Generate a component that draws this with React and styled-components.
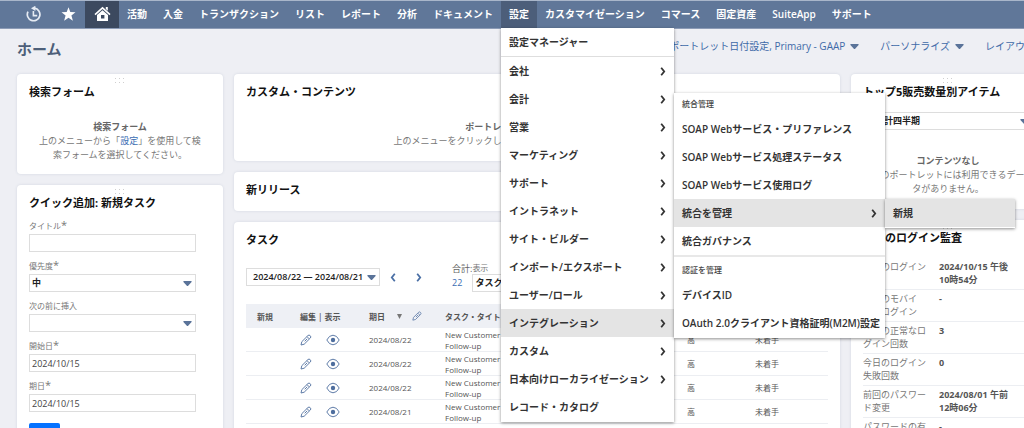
import React from "react";
import styled, { createGlobalStyle, css } from "styled-components";

const GlobalStyle = createGlobalStyle`
  * { box-sizing: border-box; }
  html { scrollbar-width: none; }
  body {
    margin: 0;
    background: #eeeff4;
    color: #333;
    font-family: "Open Sans", "Noto Sans CJK JP", sans-serif;
    font-size: 9px;
    line-height: 14px;
  }
  button, input, select { font: inherit; color: inherit; }
  ul { list-style: none; margin: 0; padding: 0; }
  h1, h2, h3, p { margin: 0; }
`;

const Page = styled.div`
  min-height: 100vh;
  overflow: hidden;
`;

/* Navigation */
const NavBar = styled.nav`
  position: relative;
  z-index: 10;
  height: 29px;
  background: #607799;
  border-top: 1px solid #a9b6ca;
  border-bottom: 1px solid #8c9bb6;
`;
const NavList = styled.ul`
  display: flex;
  height: 100%;
  padding-left: 17px;
`;
const NavItem = styled.li`
  position: relative;
  height: 100%;
`;
const NavButton = styled.button`
  display: flex;
  align-items: center;
  justify-content: center;
  height: 100%;
  min-width: ${(p) => (p.$icon ? "34px" : "0")};
  padding: 0 ${(p) => (p.$icon ? "0" : "8px")} 1px;
  border: 0;
  background: ${(p) => (p.$tone === "current" ? "#3c495f" : p.$tone === "open" ? "#4c5e7a" : "transparent")};
  color: #fff;
  font-size: 10px;
  font-weight: 600;
  white-space: nowrap;
`;

/* Menus */
const menuBox = css`
  position: absolute;
  padding-bottom: 1px;
  background: #fff;
  box-shadow: 0 1px 3px rgba(0, 0, 0, 0.45);
`;
const MainMenu = styled.ul`
  ${menuBox}
  top: 100%;
  left: 0;
  width: 173px;
`;
const SubMenu = styled.div`
  ${menuBox}
  top: -216px;
  left: 100%;
  width: 211px;
`;
const FlyOut = styled.ul`
  ${menuBox}
  top: 0;
  left: 100%;
  width: 130px;
`;
const MenuItem = styled.li`
  position: relative;
  border-bottom: ${(p) => (p.$divided ? "1px solid #dedede" : "0")};
`;
const MenuButton = styled.button`
  display: flex;
  align-items: center;
  justify-content: space-between;
  width: 100%;
  height: 28px;
  padding: 0 8px;
  border: 0;
  background: ${(p) => (p.$active ? "#e4e4e4" : "transparent")};
  color: #333;
  font-size: 10px;
  font-weight: 600;
  white-space: nowrap;
  text-align: left;
`;
const MenuGroup = styled.section`
  & + & {
    border-top: 2px solid #e8e8e8;
    padding-top: 2px;
  }
`;
const MenuHeading = styled.h3`
  padding: 0 8px;
  color: #444;
  font-size: 8px;
  font-weight: 500;
  line-height: 22px;
`;

/* Page header */
const PageHeader = styled.header`
  display: flex;
  justify-content: space-between;
  height: 45px;
  margin-right: -25px;
  padding: 10px 0 0 17px;
`;
const PageTitle = styled.h1`
  color: #4d5f79;
  font-size: 15px;
  font-weight: 700;
  line-height: 20px;
`;
const HeaderLinks = styled.div`
  display: flex;
  gap: 21px;
`;
const HeaderLink = styled.a`
  display: flex;
  align-items: center;
  gap: 5px;
  height: 14px;
  color: #3e6aa8;
  font-size: 10px;
  text-decoration: none;
  white-space: nowrap;
`;

/* Dashboard */
const Dashboard = styled.main`
  display: grid;
  grid-template-columns: 206px minmax(0, 1fr) 194px;
  gap: 11px;
  margin-right: -21px;
  padding-left: 17px;
`;
const Column = styled.div`
  display: flex;
  flex-direction: column;
  gap: 11px;
  min-width: 0;
  & > section:last-child { flex: 1; }
`;
const Card = styled.section`
  position: relative;
  padding: 10px 12px ${(p) => p.$bottom || "12px"};
  border-radius: 4px;
  background: #fff;
  box-shadow: 0 0 3px rgba(60, 75, 110, 0.14);
`;
const CardTitle = styled.h2`
  color: #111;
  font-size: 11px;
  font-weight: 700;
  line-height: 16px;
  white-space: nowrap;
`;
const DragHandle = styled.span`
  position: absolute;
  top: 4px;
  left: 50%;
  display: flex;
  margin-left: -6px;
`;
const Message = styled.div`
  margin-top: ${(p) => p.$gap || "20px"};
  padding: 0 8px;
  color: #777;
  text-align: center;
`;
const MessageTitle = styled.p`
  color: #666;
  font-weight: 600;
`;
const TextLink = styled.a`
  color: #3a6db3;
  text-decoration: none;
`;

/* Forms */
const Form = styled.form`
  display: flex;
  flex-direction: column;
  align-items: flex-start;
  gap: 8px;
  padding-top: 9px;
`;
const Field = styled.div`
  display: flex;
  flex-direction: column;
  gap: 2px;
  width: 167px;
`;
const Label = styled.label`
  height: 12px;
  color: #777;
  font-size: 8px;
  line-height: 12px;
`;
const Required = styled.span`
  font-size: 11px;
  line-height: 0;
`;
const control = css`
  width: 100%;
  height: 18px;
  padding: 0 2px;
  border: 1px solid #ddd;
  border-radius: 0;
  background: #fff;
  font-size: 9px;
`;
const Input = styled.input`
  ${control}
  color: #444;
`;
const SelectWrap = styled.div`
  position: relative;
  display: flex;
  width: ${(p) => p.$width || "100%"};
  & > svg {
    position: absolute;
    top: 50%;
    right: 4px;
    margin-top: -2px;
    pointer-events: none;
  }
`;
const Select = styled.select`
  ${control}
  appearance: none;
  padding-left: ${(p) => p.$indent || "2px"};
  color: #222;
  font-weight: 600;
`;
const Filter = styled.div`
  margin-top: 12px;
`;
const SubmitButton = styled.button`
  width: 31px;
  height: 20px;
  margin-top: 3px;
  border: 0;
  border-radius: 2px;
  background: #0572ff;
`;

/* Tasks */
const TaskToolbar = styled.div`
  display: flex;
  align-items: flex-start;
  height: 42px;
  margin-top: 14px;
`;
const RangeSlot = styled.div`
  padding-top: 6px;
`;
const PageButton = styled.button`
  display: flex;
  align-items: center;
  justify-content: center;
  width: 26px;
  height: 18px;
  margin-top: 6px;
  padding: 0;
  border: 0;
  background: none;
`;
const Total = styled.div`
  display: flex;
  flex-direction: column;
  margin-left: 20px;
  color: #666;
`;
const ViewField = styled.div`
  display: flex;
  flex-direction: column;
  width: 100px;
`;
const TaskTable = styled.table`
  width: 100%;
  table-layout: fixed;
  border-collapse: separate;
  border-spacing: 0;
  font-size: 8px;
  line-height: 11px;
`;
const Th = styled.th`
  width: ${(p) => p.$w || "auto"};
  height: 24px;
  padding: 0 0 0 ${(p) => p.$pad || "8px"};
  background: #eef0f5;
  color: #555;
  font-weight: 600;
  text-align: left;
  white-space: nowrap;
`;
const Td = styled.td`
  height: 24px;
  padding: 0 0 0 8px;
  border-bottom: 1px solid #eceef2;
  color: #555;
  vertical-align: middle;
`;
const Inline = styled.span`
  display: flex;
  align-items: center;
  gap: ${(p) => p.$gap};
`;
const TaskName = styled.span`
  display: block;
  width: 60px;
`;
const IconLink = styled.a`
  display: flex;
`;

/* Login audit */
const AuditTable = styled.table`
  width: 100%;
  margin-top: 12px;
  table-layout: fixed;
  border-collapse: separate;
  border-spacing: 0;
  line-height: 13px;
`;
const AuditLabel = styled.th`
  width: 76px;
  height: 32px;
  padding: 2px 11px 3px 0;
  border-bottom: 1px solid #eceef2;
  color: #777;
  font-weight: 400;
  text-align: left;
  vertical-align: top;
`;
const AuditValue = styled.td`
  padding: 2px 0 3px;
  border-bottom: 1px solid #eceef2;
  color: #555;
  font-weight: 700;
  vertical-align: top;
  word-break: keep-all;
`;

/* Icons */
const Caret = ({ color = "#5a7399" }) => (
  <svg width="9" height="5" viewBox="0 0 9 5" aria-hidden="true">
    <path d="M1 0h7q1 0 .6 1L5.4 4.4q-.9 1-1.8 0L.4 1Q0 0 1 0z" fill={color} />
  </svg>
);
const Chevron = ({ color = "#333", left }) => (
  <svg width="6" height="9" viewBox="0 0 6 9" aria-hidden="true">
    <path d={left ? "M4.8.8 1.8 4.5 4.8 8.2" : "M1.2.8 4.2 4.5 1.2 8.2"} fill="none" stroke={color} strokeWidth="1.8" />
  </svg>
);
const HistoryIcon = () => (
  <svg width="16" height="16" viewBox="0 0 16 16" fill="none" stroke="#e6ebf3" aria-hidden="true">
    <path d="M2 5.6A6.3 6.3 0 1 0 8.5 2.2" strokeWidth="1.7" />
    <path d="M5 2.3 9.4-.3v5.2z" fill="#e6ebf3" stroke="none" />
    <path d="M7.4 5v4.6h3.8" strokeWidth="1.6" />
  </svg>
);
const StarIcon = () => (
  <svg width="15" height="15" viewBox="0 0 15 15" aria-hidden="true">
    <path d="M7.5.3 9.3 5.1l5.2.2-4.1 3.3 1.5 5.1-4.4-2.9-4.4 2.9 1.5-5.1L.5 5.3l5.2-.2z" fill="#fff" />
  </svg>
);
const HomeIcon = () => (
  <svg width="17" height="16" viewBox="0 0 17 16" aria-hidden="true">
    <path d="M11.8 1h2v3.8l-2-1.8z" fill="#fff" />
    <path d="M1 8.6 8.5 1.8 16 8.6" fill="none" stroke="#fff" strokeWidth="1.6" />
    <path d="M3 9.1 8.5 4.2 14 9.1V15H3zM7 9v3.4h3.4V9z" fill="#fff" fillRule="evenodd" />
  </svg>
);
const PencilIcon = ({ size = 12 }) => (
  <svg width={size} height={size} viewBox="0 0 12 12" fill="none" stroke="#5f7ca8" strokeWidth="1" aria-hidden="true">
    <path d="M1 11 1.8 7.7 8 1.5Q9 .5 10.2 1.7T10.4 4L4.2 10.2zM7 2.6l2.3 2.3M4.7 7.3l2.5-2.5" />
  </svg>
);
const EyeIcon = () => (
  <svg width="14" height="12" viewBox="0 0 14 12" aria-hidden="true">
    <path d="M.8 6Q3.2 1.2 7 1.2T13.2 6Q10.8 10.8 7 10.8T.8 6z" fill="none" stroke="#5f7ca8" />
    <circle cx="7" cy="6" r="2.2" fill="#4e6e9e" />
  </svg>
);
const Grip = () => (
  <DragHandle>
    <svg width="12" height="6" viewBox="0 0 12 6" fill="#cfcfcf" aria-hidden="true">
      {[1, 5, 9].map((x) => (
        <React.Fragment key={x}>
          <rect x={x} y="0" width="1" height="1" />
          <rect x={x} y="4" width="1" height="1" />
        </React.Fragment>
      ))}
    </svg>
  </DragHandle>
);

const navBefore = ["活動", "入金", "トランザクション", "リスト", "レポート", "分析", "ドキュメント"];
const navAfter = ["カスタマイゼーション", "コマース", "固定資産", "SuiteApp", "サポート"];
const setupItems = [
  "会社", "会計", "営業", "マーケティング", "サポート", "イントラネット", "サイト・ビルダー",
  "インポート/エクスポート", "ユーザー/ロール", "インテグレーション", "カスタム", "日本向けローカライゼーション",
];
const dates = ["2024/08/22", "2024/08/22", "2024/08/22", "2024/08/21"];
const audit = [
  ["前回のログイン", "2024/10/15 午後 10時54分"],
  ["前回のモバイル・ログイン", "-"],
  ["前回の正常なログイン回数", "3"],
  ["今日のログイン失敗回数", "0"],
  ["前回のパスワード変更", "2024/08/01 午前 12時06分"],
  ["パスワードの有効期限", "-"],
];

const Item = ({ label, arrow, active, divided, children }) => (
  <MenuItem $divided={divided}>
    <MenuButton type="button" $active={active}>
      {label}
      {arrow && <Chevron />}
    </MenuButton>
    {children}
  </MenuItem>
);

const IntegrationMenu = () => (
  <SubMenu>
    <MenuGroup>
      <MenuHeading>統合管理</MenuHeading>
      <ul>
        <Item label="SOAP Webサービス・プリファレンス" />
        <Item label="SOAP Webサービス処理ステータス" />
        <Item label="SOAP Webサービス使用ログ" />
        <Item label="統合を管理" arrow active>
          <FlyOut>
            <Item label="新規" active />
          </FlyOut>
        </Item>
        <Item label="統合ガバナンス" />
      </ul>
    </MenuGroup>
    <MenuGroup>
      <MenuHeading>認証を管理</MenuHeading>
      <ul>
        <Item label="デバイスID" />
        <Item label="OAuth 2.0クライアント資格証明(M2M)設定" />
      </ul>
    </MenuGroup>
  </SubMenu>
);

const Navigation = () => (
  <NavBar>
    <NavList>
      <NavItem><NavButton $icon aria-label="履歴"><HistoryIcon /></NavButton></NavItem>
      <NavItem><NavButton $icon aria-label="ショートカット"><StarIcon /></NavButton></NavItem>
      <NavItem><NavButton $icon $tone="current" aria-label="ホーム"><HomeIcon /></NavButton></NavItem>
      {navBefore.map((t) => <NavItem key={t}><NavButton>{t}</NavButton></NavItem>)}
      <NavItem>
        <NavButton $tone="open" aria-expanded="true">設定</NavButton>
        <MainMenu>
          <Item label="設定マネージャー" divided />
          {setupItems.map((t) => (
            <Item key={t} label={t} arrow active={t === "インテグレーション"}>
              {t === "インテグレーション" && <IntegrationMenu />}
            </Item>
          ))}
          <Item label="レコード・カタログ" />
        </MainMenu>
      </NavItem>
      {navAfter.map((t) => <NavItem key={t}><NavButton>{t}</NavButton></NavItem>)}
    </NavList>
  </NavBar>
);

const FieldLabel = ({ id, label, required }) => (
  <Label htmlFor={id}>{label}{required && <Required>*</Required>}</Label>
);
const TextField = ({ id, label, value, required }) => (
  <Field>
    <FieldLabel id={id} label={label} required={required} />
    <Input id={id} defaultValue={value} />
  </Field>
);
const SelectField = ({ id, label, value, required }) => (
  <Field>
    <FieldLabel id={id} label={label} required={required} />
    <SelectWrap>
      <Select id={id}><option>{value}</option></Select>
      <Caret />
    </SelectWrap>
  </Field>
);

export default function App() {
  return (
    <Page>
      <GlobalStyle />
      <Navigation />
      <PageHeader>
        <PageTitle>ホーム</PageTitle>
        <HeaderLinks>
          <HeaderLink href="#dates">ポートレット日付設定, Primary - GAAP<Caret /></HeaderLink>
          <HeaderLink href="#personalize">パーソナライズ<Caret /></HeaderLink>
          <HeaderLink href="#layout">レイアウト<Caret /></HeaderLink>
        </HeaderLinks>
      </PageHeader>
      <Dashboard>
        <Column>
          <Card>
            <Grip />
            <CardTitle>検索フォーム</CardTitle>
            <Message>
              <MessageTitle>検索フォーム</MessageTitle>
              <p>上のメニューから「<TextLink href="#setup">設定</TextLink>」を使用して検索フォームを選択してください。</p>
            </Message>
          </Card>
          <Card>
            <Grip />
            <CardTitle>クイック追加: 新規タスク</CardTitle>
            <Form>
              <TextField id="title" label="タイトル" value="" required />
              <SelectField id="priority" label="優先度" value="中" required />
              <SelectField id="insert" label="次の前に挿入" value="" />
              <TextField id="start" label="開始日" value="2024/10/15" required />
              <TextField id="due" label="期日" value="2024/10/15" required />
              <SubmitButton type="button" aria-label="保存" />
            </Form>
          </Card>
        </Column>

        <Column>
          <Card $bottom="13px">
            <CardTitle>カスタム・コンテンツ</CardTitle>
            <Message>
              <MessageTitle>ポートレットのカスタマイズと設定</MessageTitle>
              <p>上のメニューをクリックしてポートレットに表示する内容を選びます。</p>
            </Message>
          </Card>
          <Card $bottom="13px">
            <CardTitle>新リリース</CardTitle>
          </Card>
          <Card>
            <CardTitle>タスク</CardTitle>
            <TaskToolbar>
              <RangeSlot>
                <SelectWrap $width="134px">
                  <Select $indent="6px" aria-label="期間"><option>2024/08/22 — 2024/08/21</option></Select>
                  <Caret />
                </SelectWrap>
              </RangeSlot>
              <PageButton aria-label="前へ"><Chevron left color="#4a6fa5" /></PageButton>
              <PageButton aria-label="次へ"><Chevron color="#4a6fa5" /></PageButton>
              <Total>
                <span>合計:</span>
                <TextLink href="#total">22</TextLink>
              </Total>
              <ViewField>
                <Label htmlFor="view">表示</Label>
                <SelectWrap>
                  <Select id="view"><option>タスク</option></Select>
                  <Caret />
                </SelectWrap>
              </ViewField>
            </TaskToolbar>
            <TaskTable>
              <thead>
                <tr>
                  <Th $w="46px" $pad="11px">新規</Th>
                  <Th $w="69px">編集 | 表示</Th>
                  <Th $w="76px">
                    <Inline $gap="12px">期日
                      <Inline $gap="10px">
                        <svg width="5" height="5" viewBox="0 0 5 5" aria-hidden="true"><path d="M0 0h5L2.5 5z" fill="#777" /></svg>
                        <PencilIcon size={10} />
                      </Inline>
                    </Inline>
                  </Th>
                  <Th>タスク・タイトル</Th>
                  <Th $w="68px" aria-label="優先度" />
                  <Th $w="81px" aria-label="ステータス" />
                </tr>
              </thead>
              <tbody>
                {dates.map((d, i) => (
                  <tr key={i}>
                    <Td />
                    <Td>
                      <Inline $gap="14px">
                        <IconLink href="#edit" aria-label="編集"><PencilIcon /></IconLink>
                        <IconLink href="#view" aria-label="表示"><EyeIcon /></IconLink>
                      </Inline>
                    </Td>
                    <Td>{d}</Td>
                    <Td><TaskName>New Customer Follow-up</TaskName></Td>
                    <Td>高</Td>
                    <Td>未着手</Td>
                  </tr>
                ))}
              </tbody>
            </TaskTable>
          </Card>
        </Column>

        <Column>
          <Card $bottom="13px">
            <Grip />
            <CardTitle>トップ5販売数量別アイテム</CardTitle>
            <Filter>
              <SelectWrap>
                <Select aria-label="期間"><option>今会計四半期</option></Select>
                <Caret />
              </SelectWrap>
            </Filter>
            <Message $gap="24px">
              <MessageTitle>コンテンツなし</MessageTitle>
              <p>このポートレットには利用できるデータがありません。</p>
            </Message>
          </Card>
          <Card>
            <Grip />
            <CardTitle>自分のログイン監査</CardTitle>
            <AuditTable>
              <tbody>
                {audit.map(([k, v]) => (
                  <tr key={k}>
                    <AuditLabel scope="row">{k}</AuditLabel>
                    <AuditValue>{v}</AuditValue>
                  </tr>
                ))}
              </tbody>
            </AuditTable>
          </Card>
        </Column>
      </Dashboard>
    </Page>
  );
}
